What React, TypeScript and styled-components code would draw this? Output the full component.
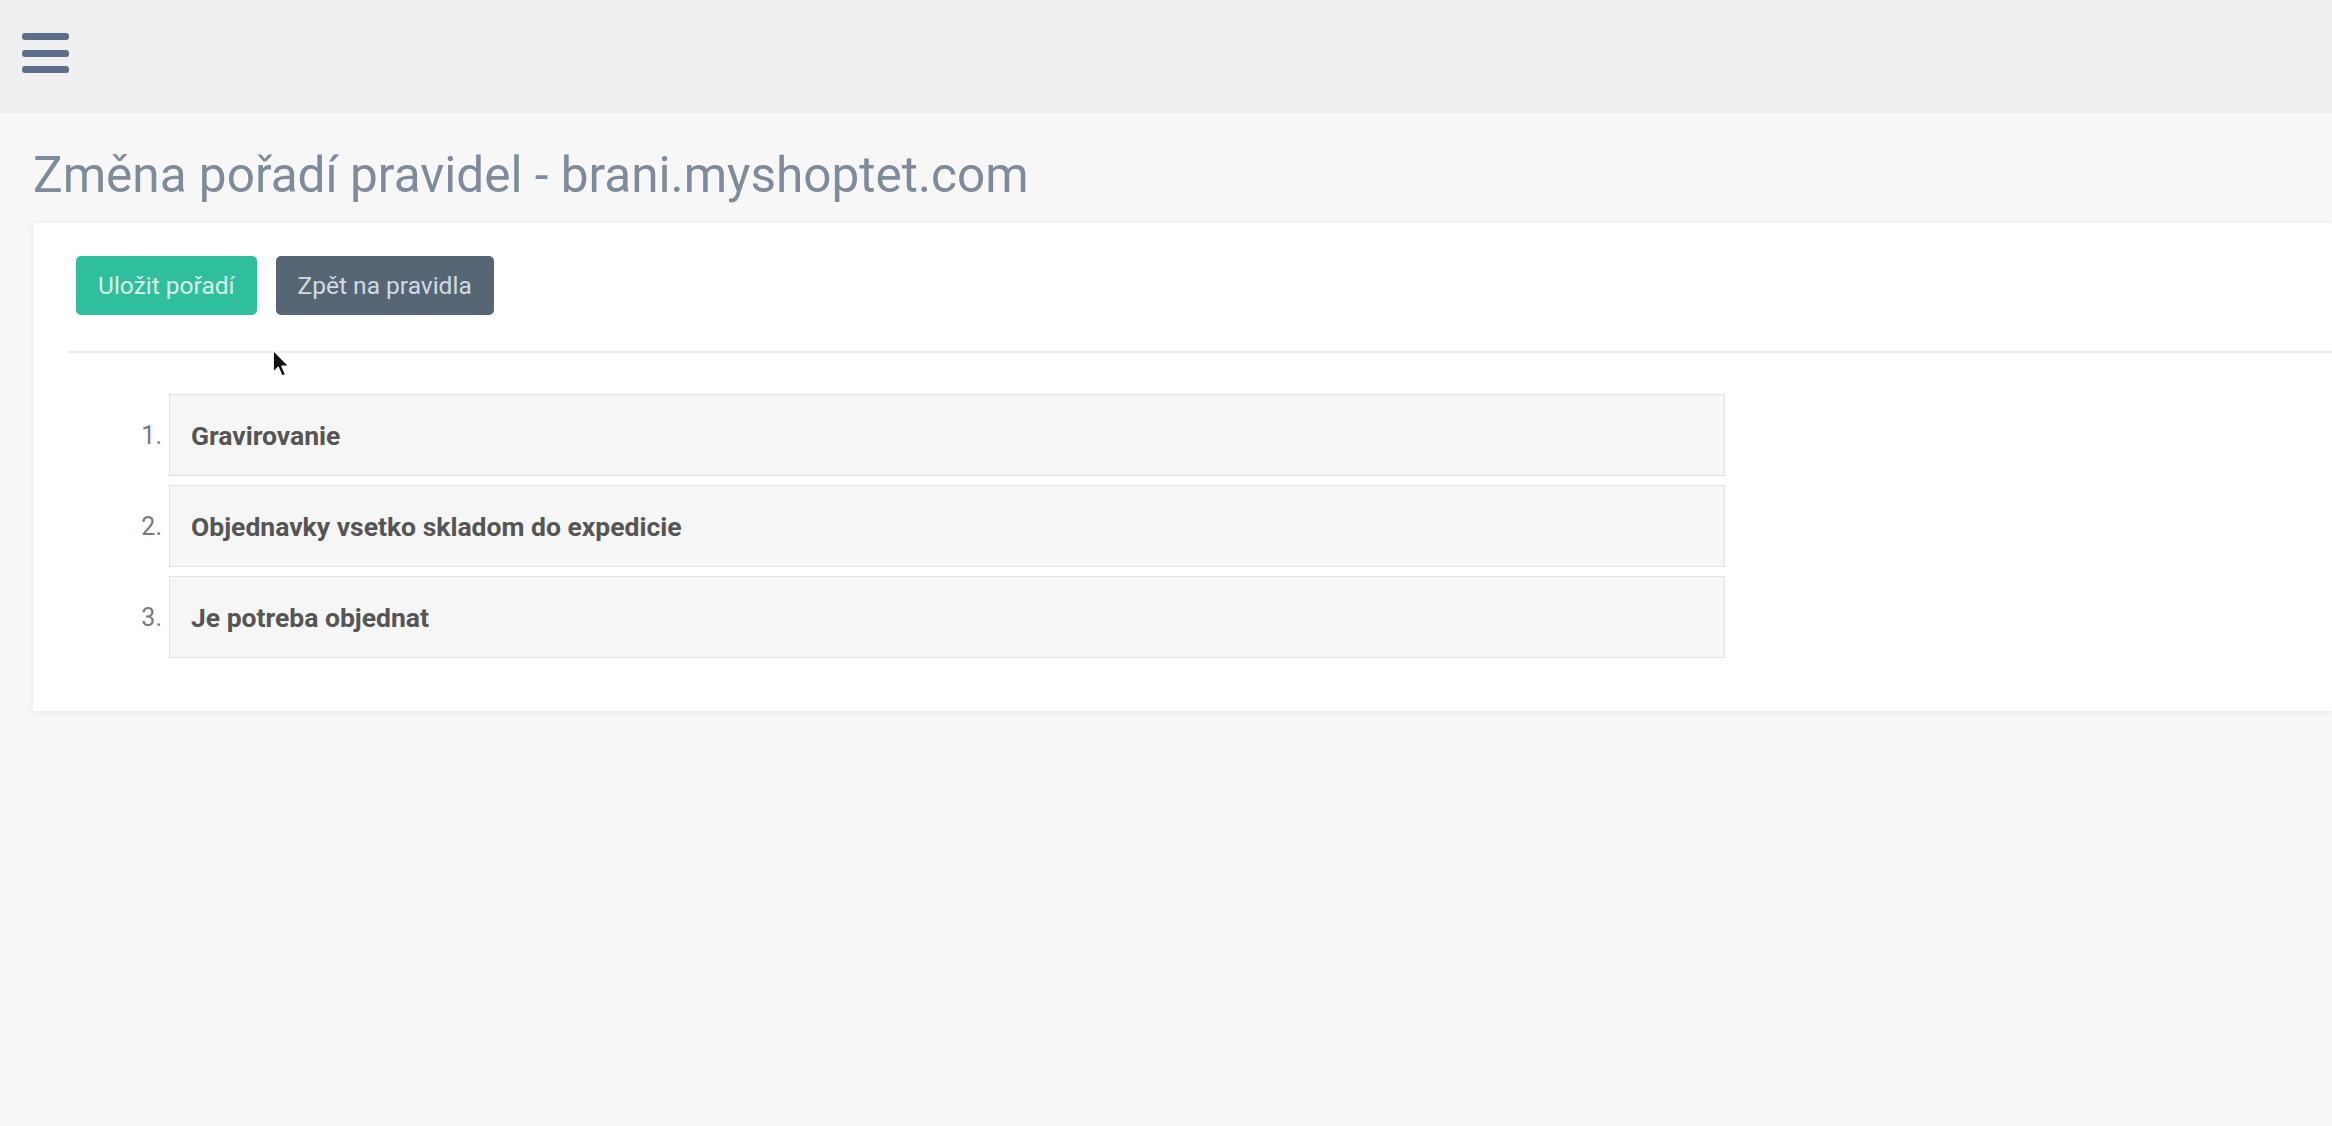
import React from "react";
import styled, { createGlobalStyle } from "styled-components";

const Global = createGlobalStyle`
  html, body { margin: 0; padding: 0; }
  body {
    background: #f7f7f7;
    font-family: Roboto, "Noto Sans", "Liberation Sans", Arial, sans-serif;
    color: #555;
    overflow: hidden;
  }
  button { font-family: inherit; }
`;

const Page = styled.div`
  position: relative;
  min-height: 100vh;
`;

const Header = styled.header`
  height: 113px;
  background: #efefef;
  display: flex;
  align-items: flex-start;
  padding: 33px 0 0 22px;
  box-sizing: border-box;
`;

const Burger = styled.button`
  display: flex;
  flex-direction: column;
  gap: 9.5px;
  padding: 0;
  border: none;
  background: transparent;
  cursor: pointer;
  span {
    display: block;
    width: 47px;
    height: 7px;
    border-radius: 3px;
    background: #5b7088;
  }
`;

const Main = styled.main`
  padding: 33px 0 0 33px;
`;

const Title = styled.h1`
  margin: 0 0 18px;
  font-size: 49.5px;
  line-height: 1.2;
  font-weight: 400;
  color: #7d8b9b;
`;

const Card = styled.section`
  background: #fff;
  box-shadow: 0 1px 5px rgba(0, 0, 0, 0.07);
  padding: 33px 0 53px 35px;
`;

const Toolbar = styled.div`
  display: flex;
  gap: 19px;
  padding-left: 8px;
`;

const Button = styled.button<{ $tone: "green" | "slate" }>`
  height: 59px;
  padding: 0 22px;
  border: none;
  border-radius: 5px;
  font-size: 24.5px;
  font-weight: 400;
  cursor: pointer;
  background: ${(p) => (p.$tone === "green" ? "#30bf9d" : "#566675")};
  color: ${(p) => (p.$tone === "green" ? "#d9f4ec" : "#d3dae1")};
`;

const Divider = styled.hr`
  margin: 36px 0 0;
  border: none;
  height: 2px;
  background: #ebebeb;
`;

const List = styled.ol`
  list-style: none;
  margin: 41px 0 0;
  padding: 0;
  display: flex;
  flex-direction: column;
  gap: 9px;
`;

const Item = styled.li`
  display: flex;
  align-items: center;
  gap: 7px;
`;

const Num = styled.span`
  width: 94px;
  text-align: right;
  font-size: 25px;
  color: #7a7a7a;
`;

const RuleBox = styled.div`
  width: 1556px;
  height: 82px;
  box-sizing: border-box;
  display: flex;
  align-items: center;
  padding-left: 21px;
  background: #f6f6f6;
  border: 1px solid #e2e2e2;
  font-size: 26.5px;
  font-weight: 700;
  color: #555;
  cursor: move;
`;

const Cursor = styled.svg`
  position: absolute;
  left: 272px;
  top: 349px;
  pointer-events: none;
`;

const rules = [
  "Gravirovanie",
  "Objednavky vsetko skladom do expedicie",
  "Je potreba objednat",
];

export default function App() {
  return (
    <Page>
      <Global />
      <Header>
        <Burger aria-label="menu">
          <span />
          <span />
          <span />
        </Burger>
      </Header>
      <Main>
        <Title>Změna pořadí pravidel - brani.myshoptet.com</Title>
        <Card>
          <Toolbar>
            <Button $tone="green">Uložit pořadí</Button>
            <Button $tone="slate">Zpět na pravidla</Button>
          </Toolbar>
          <Divider />
          <List>
            {rules.map((r, i) => (
              <Item key={r}>
                <Num>{i + 1}.</Num>
                <RuleBox>{r}</RuleBox>
              </Item>
            ))}
          </List>
        </Card>
      </Main>
      <Cursor width="20" height="30" viewBox="0 0 16 24">
        <path
          d="M1 1 L1 18.5 L5 14.6 L8 21.6 L10.8 20.4 L7.9 13.6 L13.4 13.6 Z"
          fill="#111"
          stroke="#fff"
          strokeWidth="1"
          strokeLinejoin="round"
        />
      </Cursor>
    </Page>
  );
}
